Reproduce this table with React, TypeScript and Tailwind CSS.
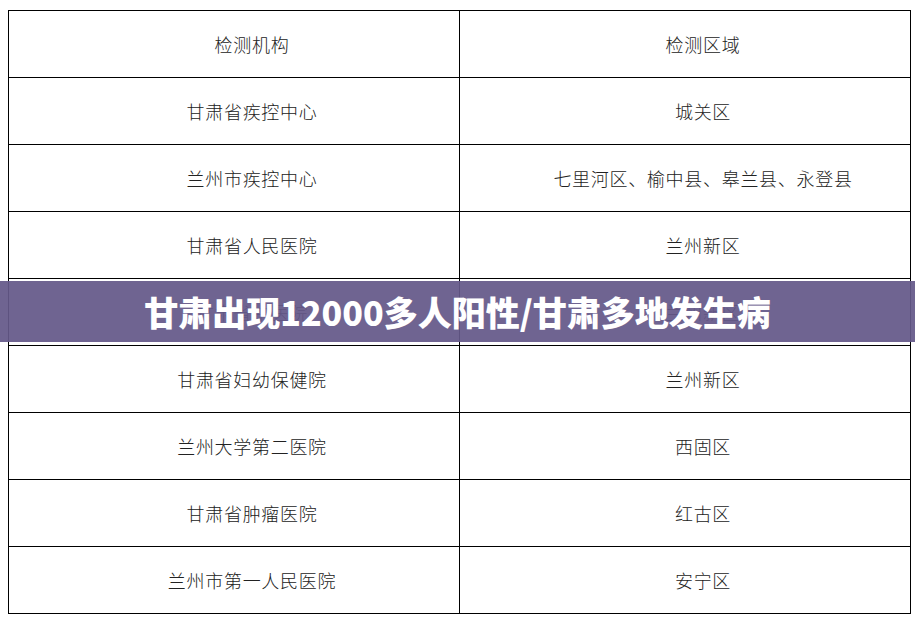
import React from "react";

const rows: [string, string][] = [
  ["检测机构", "检测区域"],
  ["甘肃省疾控中心", "城关区"],
  ["兰州市疾控中心", "七里河区、榆中县、皋兰县、永登县"],
  ["甘肃省人民医院", "兰州新区"],
  ["甘肃省中医院", "兰州新区"],
  ["甘肃省妇幼保健院", "兰州新区"],
  ["兰州大学第二医院", "西固区"],
  ["甘肃省肿瘤医院", "红古区"],
  ["兰州市第一人民医院", "安宁区"],
];

export default function App() {
  return (
    <div
      className="relative w-[915px] h-[622px] bg-white overflow-hidden pt-[10px] pl-[8px]"
      style={{ fontFamily: '"Noto Sans CJK SC", "Noto Sans", sans-serif' }}
    >
      <table className="w-[903px] border-collapse border border-black table-fixed">
        <tbody>
          {rows.map(([a, b], i) => (
            <tr key={i} className="h-[67px]">
              <td className="border border-black text-center align-middle indent-[2em] text-[18px] tracking-[0.7px] font-light text-[#222]">
                {a}
              </td>
              <td className="border border-black text-center align-middle indent-[2em] text-[18px] tracking-[0.7px] font-light text-[#222]">
                {b}
              </td>
            </tr>
          ))}
        </tbody>
      </table>
      <div className="absolute left-0 right-0 top-[281px] h-[61px] bg-[rgba(100,88,137,0.93)] flex items-center justify-center">
        <span className="text-white text-[34px] font-black leading-none">
          甘肃出现12000多人阳性/甘肃多地发生病
        </span>
      </div>
    </div>
  );
}
